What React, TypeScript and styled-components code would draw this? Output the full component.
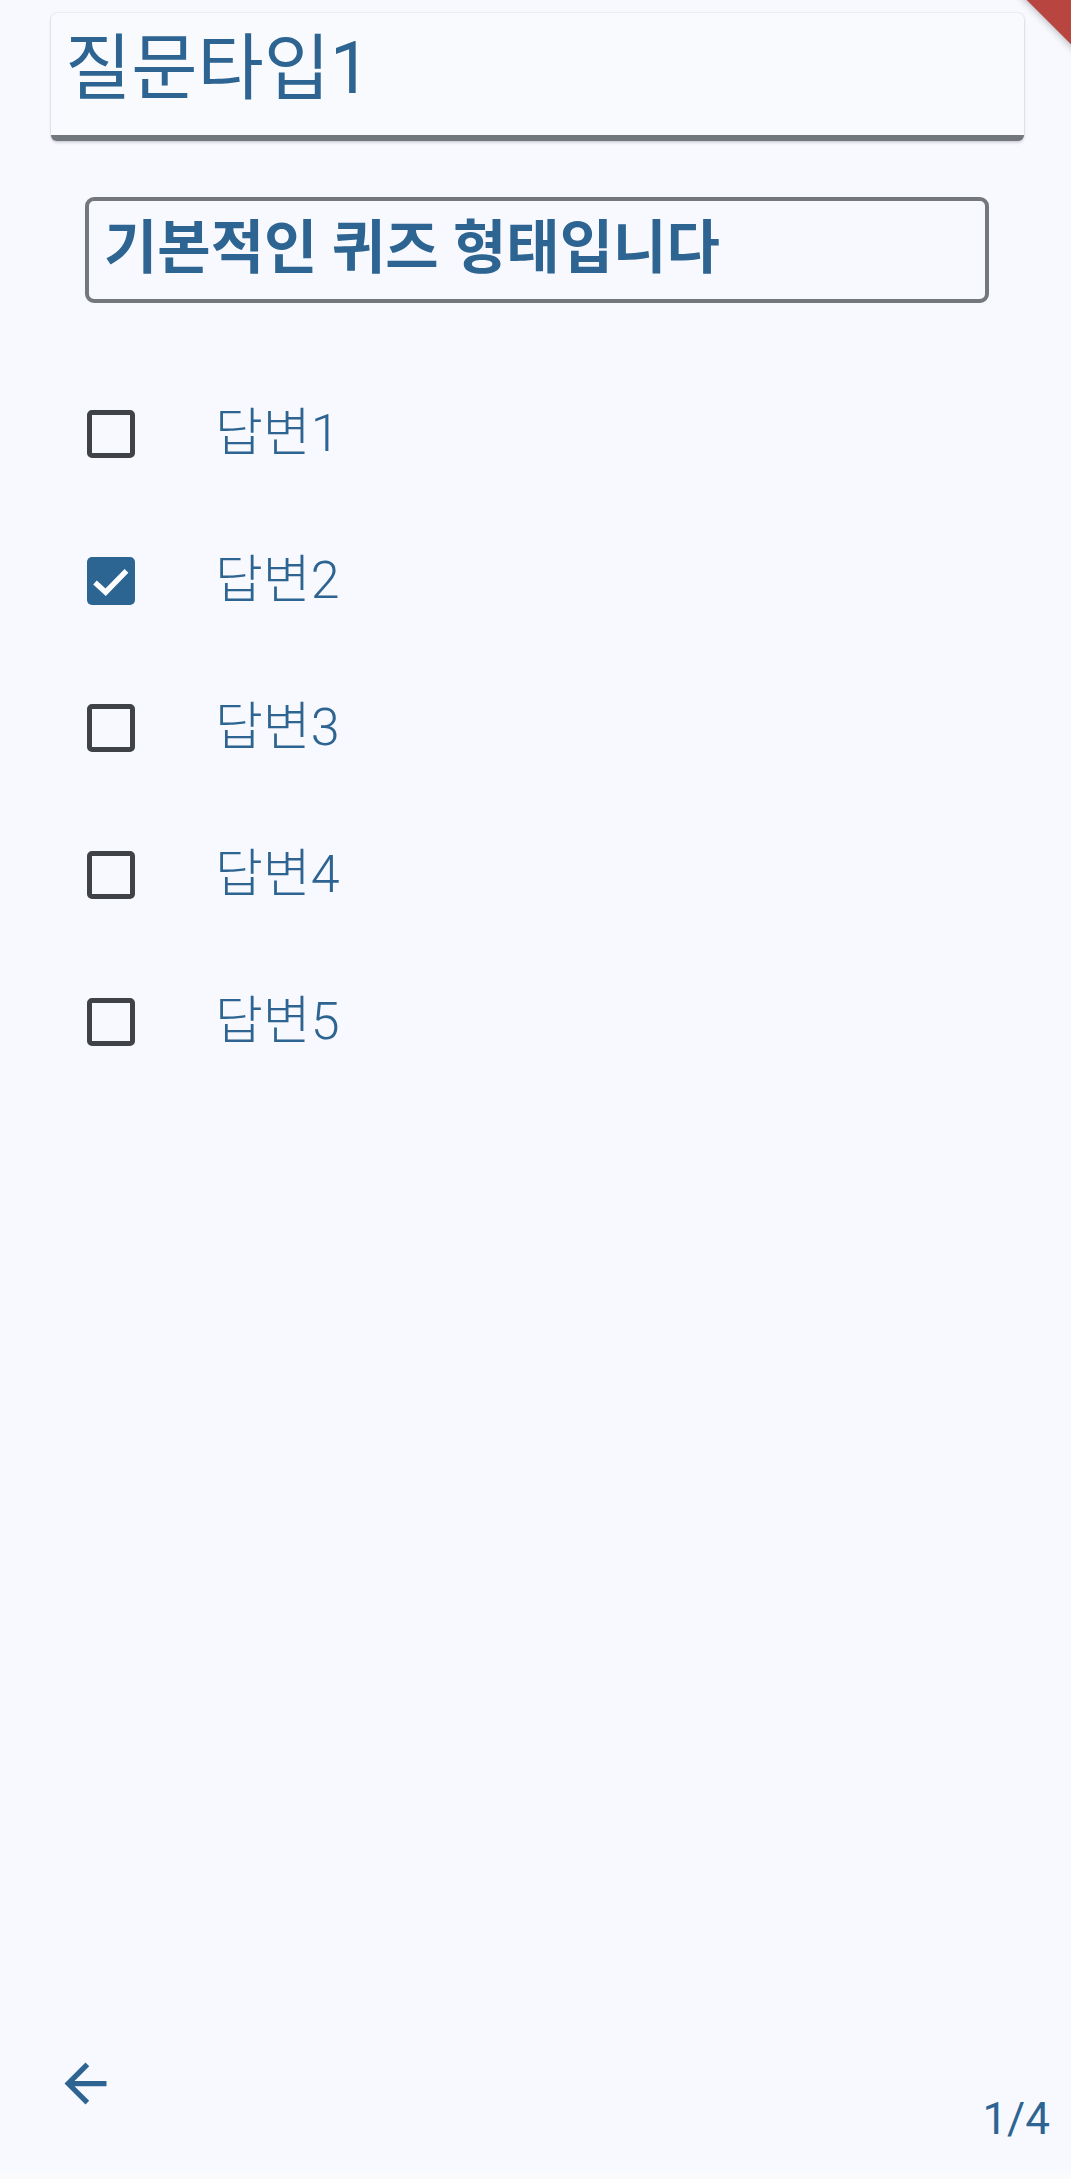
import { useState } from 'react';
import styled, { createGlobalStyle } from 'styled-components';

const GlobalStyle = createGlobalStyle`
  html, body {
    margin: 0;
    padding: 0;
    background: #f8f9fe;
  }
  * {
    box-sizing: border-box;
  }
`;

const answers = ['답변1', '답변2', '답변3', '답변4', '답변5'];

const App = () => {
  const [checked, setChecked] = useState<number[]>([1]);

  const toggle = (idx: number) => {
    setChecked((prev) =>
      prev.includes(idx) ? prev.filter((i) => i !== idx) : [...prev, idx]
    );
  };

  return (
    <>
      <GlobalStyle />
      <Page>
        <DebugCorner>
          <DebugRibbon />
        </DebugCorner>
        <Content>
          <TitleCard>
            <TitleText>질문타입1</TitleText>
          </TitleCard>
          <DescriptionBox>
            <DescriptionText>기본적인 퀴즈 형태입니다</DescriptionText>
          </DescriptionBox>
          <AnswerList>
            {answers.map((label, idx) => (
              <AnswerRow key={label} onClick={() => toggle(idx)}>
                <CheckBox $checked={checked.includes(idx)}>
                  {checked.includes(idx) && (
                    <svg width="48" height="48" viewBox="0 0 18 18">
                      <path
                        d="M3 9.6 L7 13.2 L14.8 5.2"
                        fill="none"
                        stroke="#ffffff"
                        strokeWidth="2"
                      />
                    </svg>
                  )}
                </CheckBox>
                <AnswerText>{label}</AnswerText>
              </AnswerRow>
            ))}
          </AnswerList>
        </Content>
        <Footer>
          <BackButton aria-label="back">
            <svg width="63" height="63" viewBox="0 0 24 24">
              <path
                d="M20 11H7.83l5.59-5.59L12 4l-8 8 8 8 1.41-1.41L7.83 13H20v-2z"
                fill="#2d6491"
              />
            </svg>
          </BackButton>
          <PageCounter>1/4</PageCounter>
        </Footer>
        <NavStrip />
      </Page>
    </>
  );
};

export default App;

const Page = styled.div`
  position: relative;
  min-height: 2179px;
  display: flex;
  flex-direction: column;
  background: #f8f9fe;
  overflow: hidden;
  font-family: 'Roboto', 'Noto Sans CJK KR', sans-serif;
  color: #2d6491;
`;

const DebugCorner = styled.div`
  position: absolute;
  top: 0;
  right: 0;
  width: 100px;
  height: 100px;
  overflow: hidden;
  pointer-events: none;
`;

const DebugRibbon = styled.div`
  position: absolute;
  left: -8px;
  top: -12px;
  width: 200px;
  height: 40px;
  background: #b8453f;
  transform: rotate(45deg);
  box-shadow: 0 0 8px rgba(0, 0, 0, 0.35);
`;

const Content = styled.div`
  display: flex;
  flex-direction: column;
  padding: 13px 47px 0 51px;
`;

const TitleCard = styled.div`
  height: 128px;
  display: flex;
  align-items: center;
  padding: 0 14px 10px;
  background: #f9fafe;
  border-radius: 6px;
  border-bottom: 6px solid #72777d;
  box-shadow: 0 0 2px rgba(0, 0, 0, 0.18), 0 2px 3px rgba(0, 0, 0, 0.12);
`;

const TitleText = styled.div`
  font-size: 72px;
  font-weight: 400;
  line-height: 1;
  color: #2d6491;
`;

const DescriptionBox = styled.div`
  margin: 56px 35px 0 34px;
  height: 106px;
  display: flex;
  align-items: center;
  padding: 0 15px 4px;
  border: 4px solid #74787d;
  border-radius: 9px;
`;

const DescriptionText = styled.div`
  font-size: 58px;
  font-weight: 700;
  line-height: 1;
  color: #2d6491;
`;

const AnswerList = styled.div`
  display: flex;
  flex-direction: column;
  margin-top: 57px;
`;

const AnswerRow = styled.div`
  height: 147px;
  display: flex;
  align-items: center;
  padding-left: 36px;
  cursor: pointer;
`;

const CheckBox = styled.div<{ $checked: boolean }>`
  width: 48px;
  height: 48px;
  border-radius: 5px;
  display: flex;
  align-items: center;
  justify-content: center;
  border: ${(p) => (p.$checked ? 'none' : '5px solid #3f4348')};
  background: ${(p) => (p.$checked ? '#2c6592' : 'transparent')};
`;

const AnswerText = styled.div`
  margin-left: 80px;
  font-size: 52px;
  font-weight: 300;
  line-height: 1;
  color: #2d6491;
`;

const Footer = styled.div`
  margin-top: auto;
  display: flex;
  justify-content: space-between;
  align-items: flex-end;
  padding: 0 21px 31px 54px;
`;

const BackButton = styled.button`
  width: 63px;
  height: 63px;
  padding: 0;
  margin-bottom: 26px;
  border: none;
  background: transparent;
  display: flex;
  align-items: center;
  justify-content: center;
  cursor: pointer;
`;

const PageCounter = styled.div`
  font-size: 44px;
  font-weight: 400;
  line-height: 1;
  color: #2d6491;
`;

const NavStrip = styled.div`
  height: 7px;
  background: #fbfbfd;
`;
